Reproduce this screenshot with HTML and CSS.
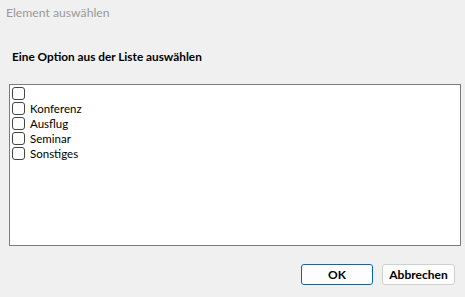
FILE: index.html
```html
<!DOCTYPE html>
<html>
<head>
<meta charset="utf-8">
<link rel="stylesheet" href="styles.css">
</head>
<body>
<div class="dialog">
  <div class="titlebar">Element auswählen</div>
  <div class="prompt">Eine Option aus der Liste auswählen</div>
  <div class="listbox">
    <label class="item"><span class="box"></span><span class="text"></span></label>
    <label class="item"><span class="box"></span><span class="text">Konferenz</span></label>
    <label class="item"><span class="box"></span><span class="text">Ausflug</span></label>
    <label class="item"><span class="box"></span><span class="text">Seminar</span></label>
    <label class="item"><span class="box"></span><span class="text">Sonstiges</span></label>
  </div>
  <div class="buttons">
    <button class="btn primary">OK</button>
    <button class="btn">Abbrechen</button>
  </div>
</div>
</body>
</html>
```
FILE: styles.css
```css
html, body {
  margin: 0;
  padding: 0;
  background: #f0f0f0;
}
.dialog {
  width: 465px;
  height: 297px;
  display: flex;
  flex-direction: column;
  font-family: Lato, "Noto Sans", sans-serif;
  font-size: 12px;
  color: #000;
}
.titlebar {
  height: 26px;
  line-height: 26px;
  padding-left: 6px;
  color: #9a9a9a;
  font-size: 12.2px;
}
.prompt {
  margin-top: 22px;
  height: 18px;
  line-height: 18px;
  padding-left: 12px;
  font-weight: 700;
  font-size: 11.8px;
}
.listbox {
  margin: 18px 0 0 9px;
  width: 448px;
  height: 159px;
  background: #fff;
  border: 1px solid #7c7c7c;
  padding: 1px 0 0 2px;
  display: flex;
  flex-direction: column;
  box-sizing: content-box;
}
.item {
  display: flex;
  align-items: center;
  height: 15px;
  gap: 5px;
}
.box {
  width: 11px;
  height: 11px;
  border: 1px solid #444;
  border-radius: 3px;
  background: #fff;
  flex: none;
}
.text {
  line-height: 14px;
  font-size: 11.5px;
}
.buttons {
  display: flex;
  justify-content: flex-end;
  gap: 9px;
  margin-top: 18px;
  padding-right: 10px;
}
.btn {
  height: 21px;
  width: 73px;
  padding: 0;
  font-family: inherit;
  font-size: 12px;
  font-weight: 700;
  background: #fdfdfd;
  border: 1px solid #d0d0d0;
  border-radius: 3px;
  color: #000;
}
.btn.primary {
  border: 1px solid #0067c0;
  width: 72px;
}
```
